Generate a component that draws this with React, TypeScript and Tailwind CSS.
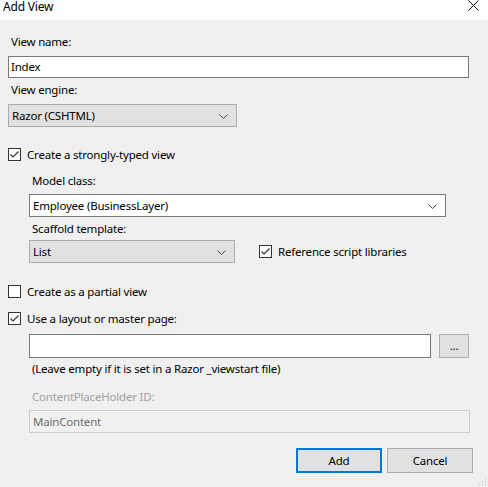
import React from "react";

const font = { fontFamily: '"Noto Sans", "Segoe UI", sans-serif' };

function Chevron() {
  return (
    <svg width="9" height="5" viewBox="0 0 9 5" className="shrink-0 mt-[2px]">
      <path d="M0.5 0.5 L4.5 4.5 L8.5 0.5" fill="none" stroke="#444" strokeWidth="1" />
    </svg>
  );
}

function Check({ checked }: { checked: boolean }) {
  return (
    <div className="w-[13px] h-[13px] border border-[#333333] bg-white flex items-center justify-center shrink-0">
      {checked && (
        <svg width="11" height="11" viewBox="0 0 11 11">
          <path d="M1.5 5.5 L4 8 L9.5 2.5" fill="none" stroke="#333" strokeWidth="1.2" />
        </svg>
      )}
    </div>
  );
}

export default function App() {
  return (
    <div className="w-[488px] h-[487px] bg-[#f0f0f0] text-[11.5px] tracking-[-0.2px] text-black overflow-hidden relative" style={font}>
      <div className="h-[20px] bg-white flex items-start justify-between">
        <div className="pl-[3px] leading-[14px] text-[12px]">Add View</div>
        <svg width="11" height="11" viewBox="0 0 11 11" className="mr-[9px] mt-[0px]">
          <path d="M0.5 0.5 L10.5 10.5 M10.5 0.5 L0.5 10.5" stroke="#111" strokeWidth="1" fill="none" />
        </svg>
      </div>
      <div className="flex flex-col pl-[8px]">
        <div className="leading-[16px] mt-[14px] pl-[3px]">View name:</div>
        <div className="mt-[6px] w-[461px] h-[22px] border border-[#7a7a7a] bg-white flex items-center pl-[2px] leading-[16px]">Index</div>
        <div className="leading-[16px] mt-[4px] pl-[3px]">View engine:</div>
        <div className="mt-[6px] w-[229px] h-[23px] border border-[#adadad] bg-[#e1e1e1] flex items-center justify-between pl-[3px] pr-[8px]">
          <span>Razor (CSHTML)</span>
          <Chevron />
        </div>
        <div className="mt-[21px] flex items-center gap-[6px] h-[13px]">
          <Check checked />
          <span className="leading-[16px]">Create a strongly-typed view</span>
        </div>
        <div className="pl-[21px] flex flex-col">
          <div className="leading-[16px] mt-[12px] pl-[3px]">Model class:</div>
          <div className="mt-[5px] w-[417px] h-[23px] border border-[#7a7a7a] bg-white flex items-center justify-between pl-[3px] pr-[8px]">
            <span>Employee (BusinessLayer)</span>
            <Chevron />
          </div>
          <div className="leading-[16px] mt-[4px] pl-[3px]">Scaffold template:</div>
          <div className="mt-[3px] flex items-center">
            <div className="w-[206px] h-[23px] border border-[#adadad] bg-[#e1e1e1] flex items-center justify-between pl-[3px] pr-[8px]">
              <span>List</span>
              <Chevron />
            </div>
            <div className="ml-[24px] flex items-center gap-[6px]">
              <Check checked />
              <span className="leading-[16px]">Reference script libraries</span>
            </div>
          </div>
        </div>
        <div className="mt-[22px] flex items-center gap-[6px] h-[13px]">
          <Check checked={false} />
          <span className="leading-[16px]">Create as a partial view</span>
        </div>
        <div className="mt-[14px] flex items-center gap-[6px] h-[13px]">
          <Check checked />
          <span className="leading-[16px]">Use a layout or master page:</span>
        </div>
        <div className="pl-[21px] flex flex-col">
          <div className="mt-[9px] flex items-center">
            <div className="w-[402px] h-[24px] border border-[#7a7a7a] bg-white" />
            <div className="ml-[8px] w-[30px] h-[24px] border border-[#adadad] bg-[#e1e1e1] flex items-end justify-center leading-[12px] pb-[5px]">...</div>
          </div>
          <div className="leading-[16px] mt-[3px] pl-[3px]">(Leave empty if it is set in a Razor _viewstart file)</div>
          <div className="leading-[16px] mt-[12px] pl-[3px] text-[#a0a0a0]">ContentPlaceHolder ID:</div>
          <div className="mt-[5px] w-[441px] h-[23px] border border-[#cccccc] bg-[#f0f0f0] flex items-center pl-[3px] text-[#6d6d6d]">MainContent</div>
        </div>
        <div className="mt-[15px] flex justify-end gap-[5px] pr-[15px]">
          <div className="w-[86px] h-[25px] border-2 border-[#0078d7] bg-[#e1e1e1] flex items-center justify-center">Add</div>
          <div className="w-[86px] h-[25px] border border-[#adadad] bg-[#e1e1e1] flex items-center justify-center">Cancel</div>
        </div>
      </div>
      <svg width="8" height="8" viewBox="0 0 8 8" className="absolute right-[1px] bottom-[1px]">
        <rect x="6" y="0" width="1" height="1" fill="#b8b8b8" />
        <rect x="3" y="3" width="1" height="1" fill="#b8b8b8" />
        <rect x="6" y="3" width="1" height="1" fill="#b8b8b8" />
        <rect x="0" y="6" width="1" height="1" fill="#b8b8b8" />
        <rect x="3" y="6" width="1" height="1" fill="#b8b8b8" />
        <rect x="6" y="6" width="1" height="1" fill="#b8b8b8" />
      </svg>
    </div>
  );
}
